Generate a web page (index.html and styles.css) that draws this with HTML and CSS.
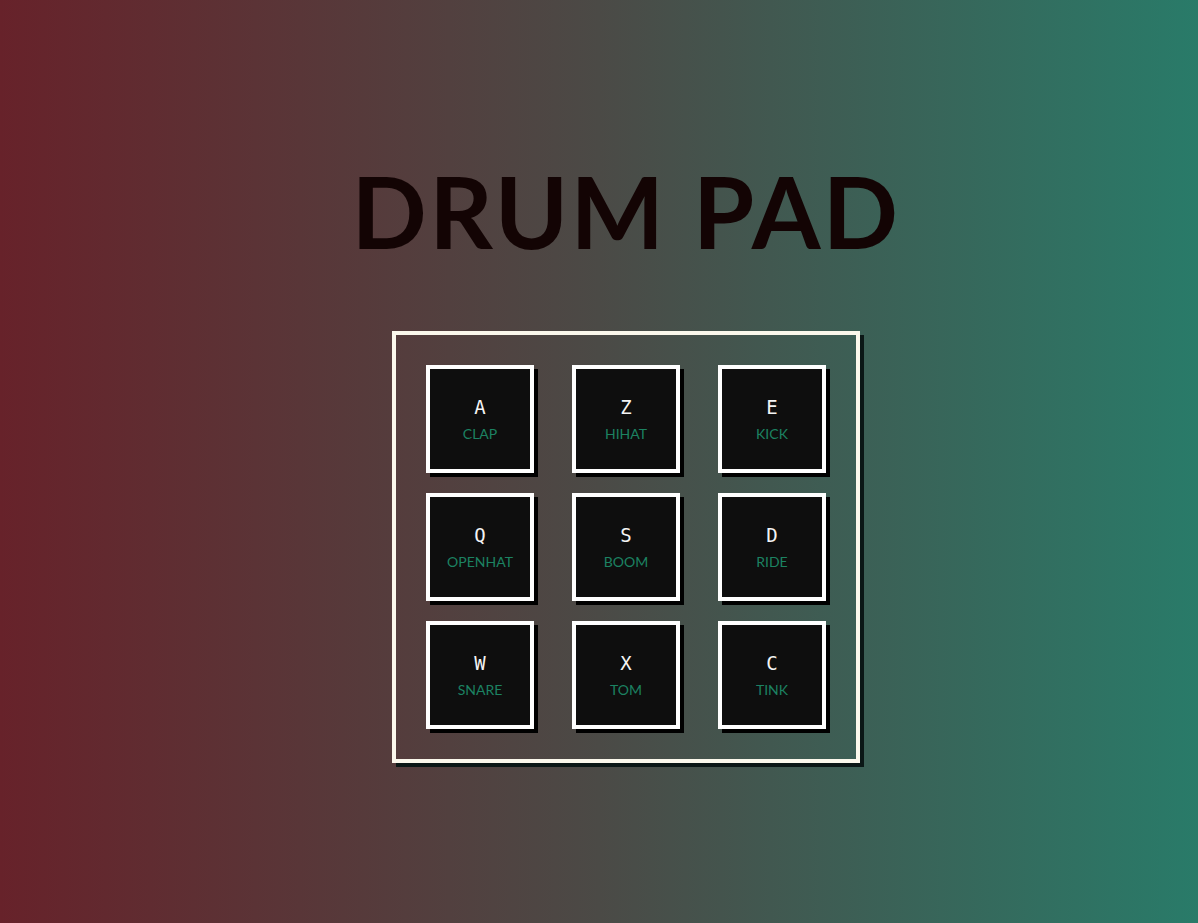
FILE: index.html
```html
<!DOCTYPE html>
<html lang="en">
<head>
<meta charset="utf-8">
<title>Drum Pad</title>
<link rel="stylesheet" href="styles.css">
</head>
<body>
<main class="page">
  <h1 class="title">DRUM PAD</h1>
  <section class="board">
    <div class="pad"><kbd class="key">A</kbd><span class="sound">CLAP</span></div>
    <div class="pad"><kbd class="key">Z</kbd><span class="sound">HIHAT</span></div>
    <div class="pad"><kbd class="key">E</kbd><span class="sound">KICK</span></div>
    <div class="pad"><kbd class="key">Q</kbd><span class="sound">OPENHAT</span></div>
    <div class="pad"><kbd class="key">S</kbd><span class="sound">BOOM</span></div>
    <div class="pad"><kbd class="key">D</kbd><span class="sound">RIDE</span></div>
    <div class="pad"><kbd class="key">W</kbd><span class="sound">SNARE</span></div>
    <div class="pad"><kbd class="key">X</kbd><span class="sound">TOM</span></div>
    <div class="pad"><kbd class="key">C</kbd><span class="sound">TINK</span></div>
  </section>
</main>
</body>
</html>
```

FILE: styles.css
```css
* { box-sizing: border-box; }
html, body { margin: 0; height: 100%; }
body {
  background: linear-gradient(to right, #67222a 0%, #4b4a46 50%, #297b69 100%);
  font-family: "Lato", "Open Sans", sans-serif;
  overflow: hidden;
}
.page {
  display: flex;
  flex-direction: column;
  align-items: center;
  padding-left: 54px;
  padding-top: 152px;
}
.title {
  margin: 0;
  font-family: "Lato", sans-serif;
  font-weight: 700;
  font-size: 99px;
  line-height: 118px;
  letter-spacing: 2.4px;
  color: #130404;
}
.board {
  margin-top: 61px;
  width: 468px;
  height: 432px;
  border: 4px solid #fbf8ec;
  box-shadow: 4px 4px 0 #0b1716;
  padding: 30px;
  display: grid;
  grid-template-columns: repeat(3, 108px);
  grid-template-rows: repeat(3, 108px);
  column-gap: 38px;
  row-gap: 20px;
}
.pad {
  border: 4px solid #ffffff;
  background: #0e0e0e;
  box-shadow: 4px 4px 0 #000000;
  display: flex;
  flex-direction: column;
  align-items: center;
  justify-content: center;
}
.key {
  font-family: "DejaVu Sans Mono", monospace;
  font-size: 19px;
  line-height: 22px;
  color: #f4f4f4;
}
.sound {
  margin-top: 8px;
  font-family: "Lato", sans-serif;
  font-weight: 400;
  font-size: 14px;
  line-height: 16px;
  color: #1c8262;
}
```
